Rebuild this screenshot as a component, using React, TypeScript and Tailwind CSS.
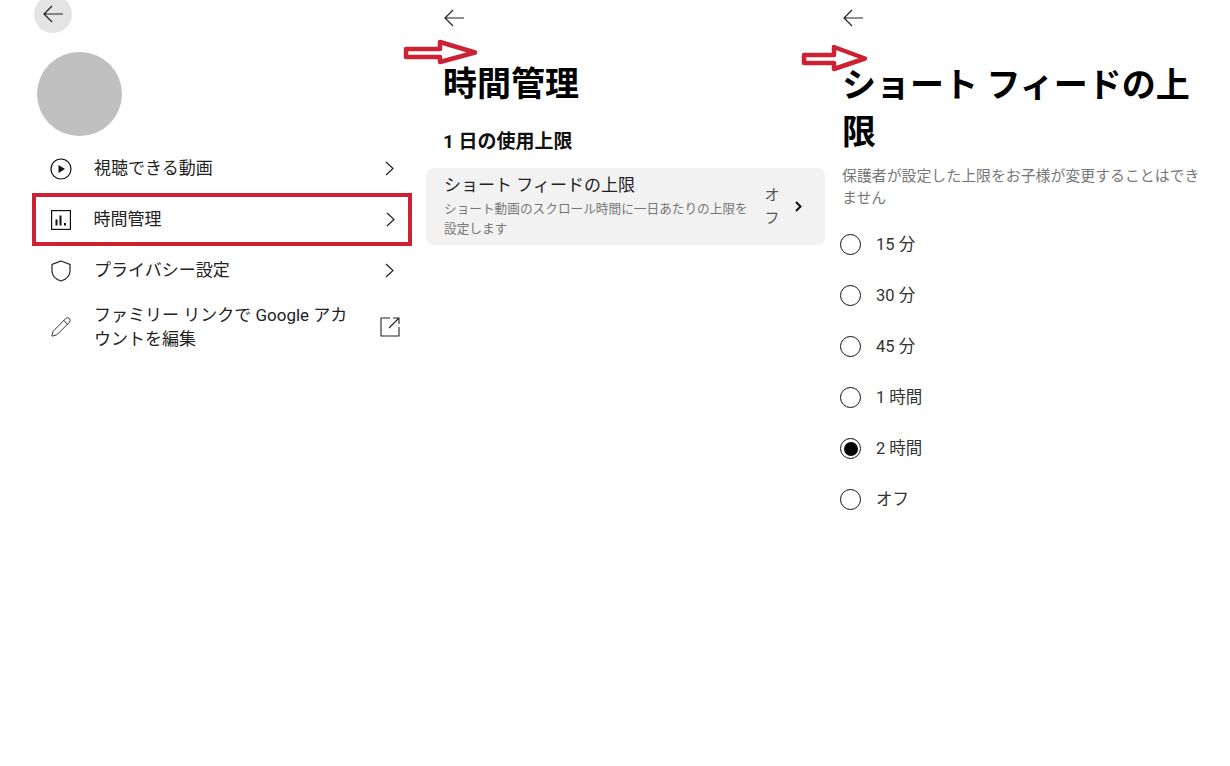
import { Pencil } from 'lucide-react'

const font = { fontFamily: 'Roboto, "Noto Sans CJK JP", "Noto Sans", sans-serif' }

function BackIcon() {
  return (
    <svg width="22" height="22" viewBox="0 0 22 22" fill="none" stroke="#222" strokeWidth="1.2">
      <path d="M21 11H2M10 3L2 11L10 19" />
    </svg>
  )
}

function Chevron() {
  return (
    <svg width="9" height="15" viewBox="0 0 9 15" fill="none" stroke="#222" strokeWidth="1.2">
      <path d="M1 1L8 7.5L1 14" />
    </svg>
  )
}

function PlayIcon() {
  return (
    <svg width="22" height="22" viewBox="0 0 22 22" fill="none">
      <circle cx="11" cy="11" r="10" stroke="#111" strokeWidth="1.2" />
      <path d="M8.5 7L15 11L8.5 15Z" fill="#111" />
    </svg>
  )
}

function StatsIcon() {
  return (
    <svg width="20" height="20" viewBox="0 0 20 20" fill="none">
      <rect x="0.6" y="0.6" width="18.8" height="18.8" stroke="#111" strokeWidth="1.2" />
      <path d="M5.5 9.5V15.5M9.5 5.5V15.5M14 13V15.5" stroke="#111" strokeWidth="2" />
    </svg>
  )
}

function ShieldIcon() {
  return (
    <svg width="20" height="22" viewBox="0 0 20 22" fill="none" stroke="#222" strokeWidth="1.2">
      <path d="M10 1L19 4.5V11C19 16 14.5 19.5 10 21C5.5 19.5 1 16 1 11V4.5Z" />
    </svg>
  )
}

function ExternalIcon() {
  return (
    <svg width="20" height="20" viewBox="0 0 20 20" fill="none" stroke="#222" strokeWidth="1.1">
      <path d="M10 1H1V19H19V10" />
      <path d="M9 11L19 1M13 1H19V7" />
    </svg>
  )
}

function MenuRow({ icon, label, boxed }: { icon: React.ReactNode; label: string; boxed?: boolean }) {
  return (
    <div className={`flex items-center ${boxed ? 'border-[4.5px] border-[#cc2233] -my-[1px] h-[53px] pl-[13.5px] pr-[13.5px]' : 'h-[51px] pl-[18px] pr-[18px]'}`}>
      <div className="w-[22px] flex justify-center">{icon}</div>
      <span className="ml-[22px] pt-[1px] text-[17px] text-[#222] flex-1">{label}</span>
      <Chevron />
    </div>
  )
}

function Radio({ label, checked }: { label: string; checked?: boolean }) {
  return (
    <div className="flex items-center h-[51px]">
      <div className="w-[21px] h-[21px] rounded-full border-[1.5px] border-[#111] flex items-center justify-center">
        {checked && <div className="w-[14px] h-[14px] rounded-full bg-black" />}
      </div>
      <span className="ml-[15px] pt-[1px] text-[16.5px] text-[#333]">{label}</span>
    </div>
  )
}

export default function App() {
  return (
    <div className="relative w-[1230px] h-[766px] overflow-hidden bg-white flex" style={font}>
      {/* left: settings menu */}
      <div className="w-[426px] pl-[32px] pr-[14px]">
        <div className="ml-[2px] -mt-[5px] w-[38px] h-[38px] rounded-full bg-[#e4e4e4] flex items-center justify-center">
          <BackIcon />
        </div>
        <div className="ml-[5px] mt-[19px] w-[85px] h-[84px] rounded-full bg-[#c0c0c0]" />
        <div className="mt-[7px]">
          <MenuRow icon={<PlayIcon />} label="視聴できる動画" />
          <MenuRow icon={<StatsIcon />} label="時間管理" boxed />
          <MenuRow icon={<ShieldIcon />} label="プライバシー設定" />
          <div className="flex items-center pl-[18px] pr-[12px] mt-[7px]">
            <div className="w-[22px] flex justify-center">
              <Pencil className="w-[22px] h-[22px] text-[#222]" strokeWidth={1} />
            </div>
            <span className="ml-[22px] text-[17px] leading-[24px] text-[#222] w-[262px]">ファミリー リンクで Google アカウントを編集</span>
            <div className="ml-auto">
              <ExternalIcon />
            </div>
          </div>
        </div>
      </div>

      {/* middle: time management */}
      <div className="w-[400px]">
        <div className="ml-[17px] mt-[7px]">
          <BackIcon />
        </div>
        <h1 className="ml-[17px] mt-[30px] text-[34px] leading-[50px] font-bold text-black">時間管理</h1>
        <h2 className="ml-[17px] mt-[20px] text-[19px] leading-[26px] font-bold text-[#111]">1 日の使用上限</h2>
        <div className="mt-[13px] w-[399px] h-[77px] rounded-[8px] bg-[#f2f2f2] flex items-center pl-[18px] pr-[14px]">
          <div className="w-[306px]">
            <div className="mb-[3px] text-[17px] leading-[22px] text-[#222]">ショート フィードの上限</div>
            <div className="text-[12.67px] leading-[20px] text-[#777]">ショート動画のスクロール時間に一日あたりの上限を設定します</div>
          </div>
          <div className="ml-[14px] w-[16px] text-[15px] leading-[23px] text-[#555] text-center">オフ</div>
          <svg className="ml-[15px]" width="7" height="11" viewBox="0 0 7 11" fill="none" stroke="#111" strokeWidth="2">
            <path d="M1 1L5.5 5.5L1 10" />
          </svg>
        </div>
      </div>

      {/* right: limit options */}
      <div className="flex-1 pl-[16px]">
        <div className="mt-[7px]">
          <BackIcon />
        </div>
        <h1 className="mt-[33px] w-[360px] text-[34px] leading-[47px] font-bold text-black">ショート フィードの上限</h1>
        <p className="mt-[9px] w-[362px] text-[14.9px] leading-[22px] text-[#777]">保護者が設定した上限をお子様が変更することはできません</p>
        <div className="mt-[10px] -ml-[2px]">
          <Radio label="15 分" />
          <Radio label="30 分" />
          <Radio label="45 分" />
          <Radio label="1 時間" />
          <Radio label="2 時間" checked />
          <Radio label="オフ" />
        </div>
      </div>

      {/* annotation arrows */}
      <svg className="absolute left-[403px] top-[39px]" width="75" height="27" viewBox="0 0 75 27">
        <path d="M3 10H37V3L72 13.5L37 23V18H3Z" fill="white" stroke="#cc2233" strokeWidth="4.5" strokeLinejoin="round" />
      </svg>
      <svg className="absolute left-[801px] top-[43px]" width="68" height="30" viewBox="0 0 68 30">
        <path d="M3 12H33V4L64 15.5L33 26V20H3Z" fill="white" stroke="#cc2233" strokeWidth="4.5" strokeLinejoin="round" />
      </svg>
    </div>
  )
}
